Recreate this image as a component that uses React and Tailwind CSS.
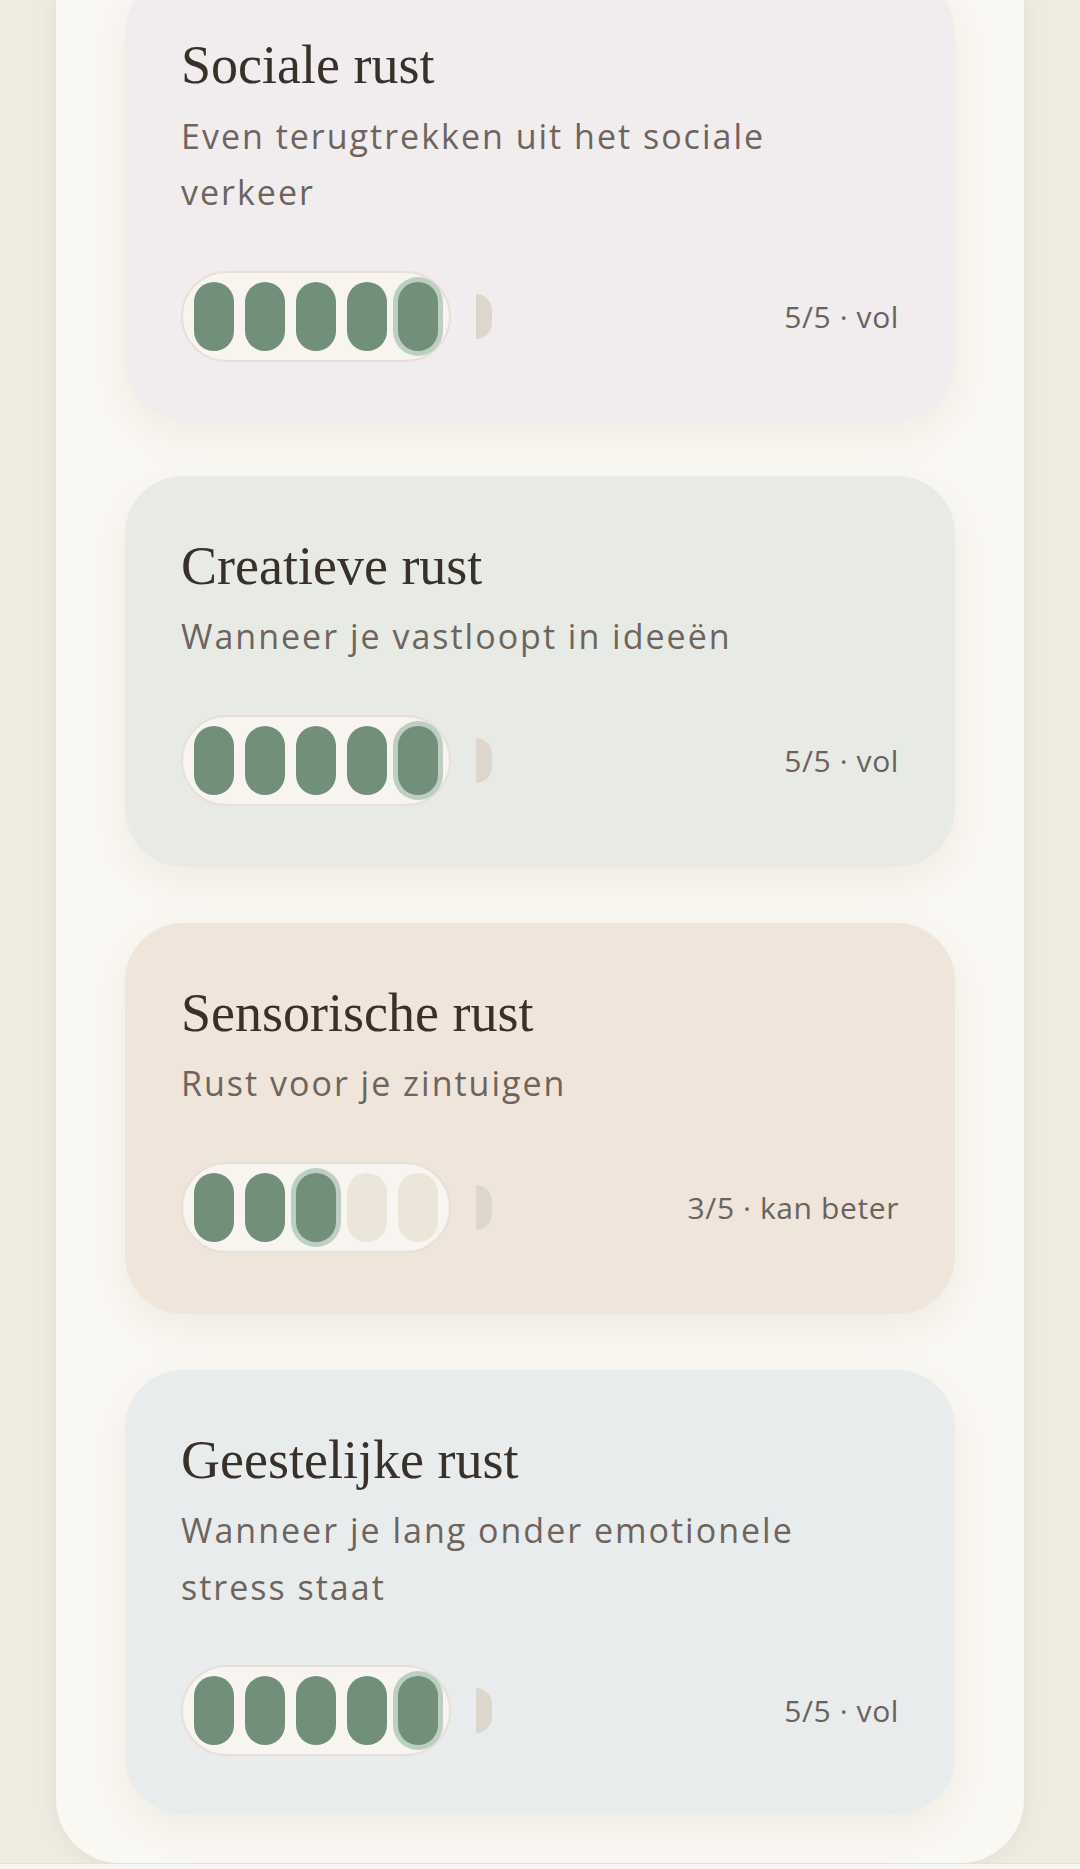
import React from 'react';

const rests = [
  { title: 'Sociale rust', text: 'Even terugtrekken uit het sociale verkeer', level: 5, bg: 'bg-[#f1edee]' },
  { title: 'Creatieve rust', text: 'Wanneer je vastloopt in ideeën', level: 5, bg: 'bg-[#e8ebe5]' },
  { title: 'Sensorische rust', text: 'Rust voor je zintuigen', level: 3, bg: 'bg-[#efe5db]' },
  { title: 'Geestelijke rust', text: 'Wanneer je lang onder emotionele stress staat', level: 5, bg: 'bg-[#e9eced]' },
];

const Battery = ({ level }) => (
  <div className="flex items-center gap-[25px]">
    <div className="flex items-center gap-[11px] h-[91px] px-[11px] rounded-full bg-[#f8f5f0] border-2 border-[#e7e0d9]">
      {[1, 2, 3, 4, 5].map((i) => (
        <div
          key={i}
          className={`w-[40px] h-[69px] rounded-full ${
            i <= level ? 'bg-[#728f7a]' : 'bg-[#ebe5da]'
          } ${i === level ? 'ring-[5px] ring-[#bccfc2]' : ''}`}
        />
      ))}
    </div>
    <div className="w-[16px] h-[45px] rounded-r-full bg-[#ddd6cc]" />
  </div>
);

const RestCard = ({ title, text, level, bg }) => (
  <div className={`${bg} min-h-[391px] rounded-[58px] px-[56px] pt-[58px] pb-[58px] shadow-[0_14px_40px_rgba(150,130,100,0.10)]`}>
    <h3 className="font-['Liberation_Serif',serif] text-[54px] leading-[1.2] text-[#3a302a]">{title}</h3>
    <p className="mt-[10px] font-['Open_Sans',sans-serif] text-[34px] leading-[1.66] tracking-[2px] text-[#6e645d]">{text}</p>
    <div className="mt-[50px] flex items-center justify-between">
      <Battery level={level} />
      <span className="font-['Open_Sans',sans-serif] text-[30px] tracking-[0.6px] text-[#6b625c]">
        {level}/5 · {level === 5 ? 'vol' : 'kan beter'}
      </span>
    </div>
  </div>
);

export default function App() {
  return (
    <div className="min-h-screen h-[1869px] overflow-hidden bg-[#efebe1] flex flex-col">
      <div className="flex-1 mx-[56px] bg-[#faf8f3] rounded-b-[64px] shadow-[0_0_18px_rgba(170,155,125,0.18)] px-[69px] pb-[50px] overflow-hidden">
        <div className="-mt-[25px] flex flex-col gap-[56px]">
          {rests.map((r) => (
            <RestCard key={r.title} {...r} />
          ))}
        </div>
      </div>
      <div className="h-[6px] bg-[#f8f6f1] border-t border-[#e6e1d8]" />
    </div>
  );
}
